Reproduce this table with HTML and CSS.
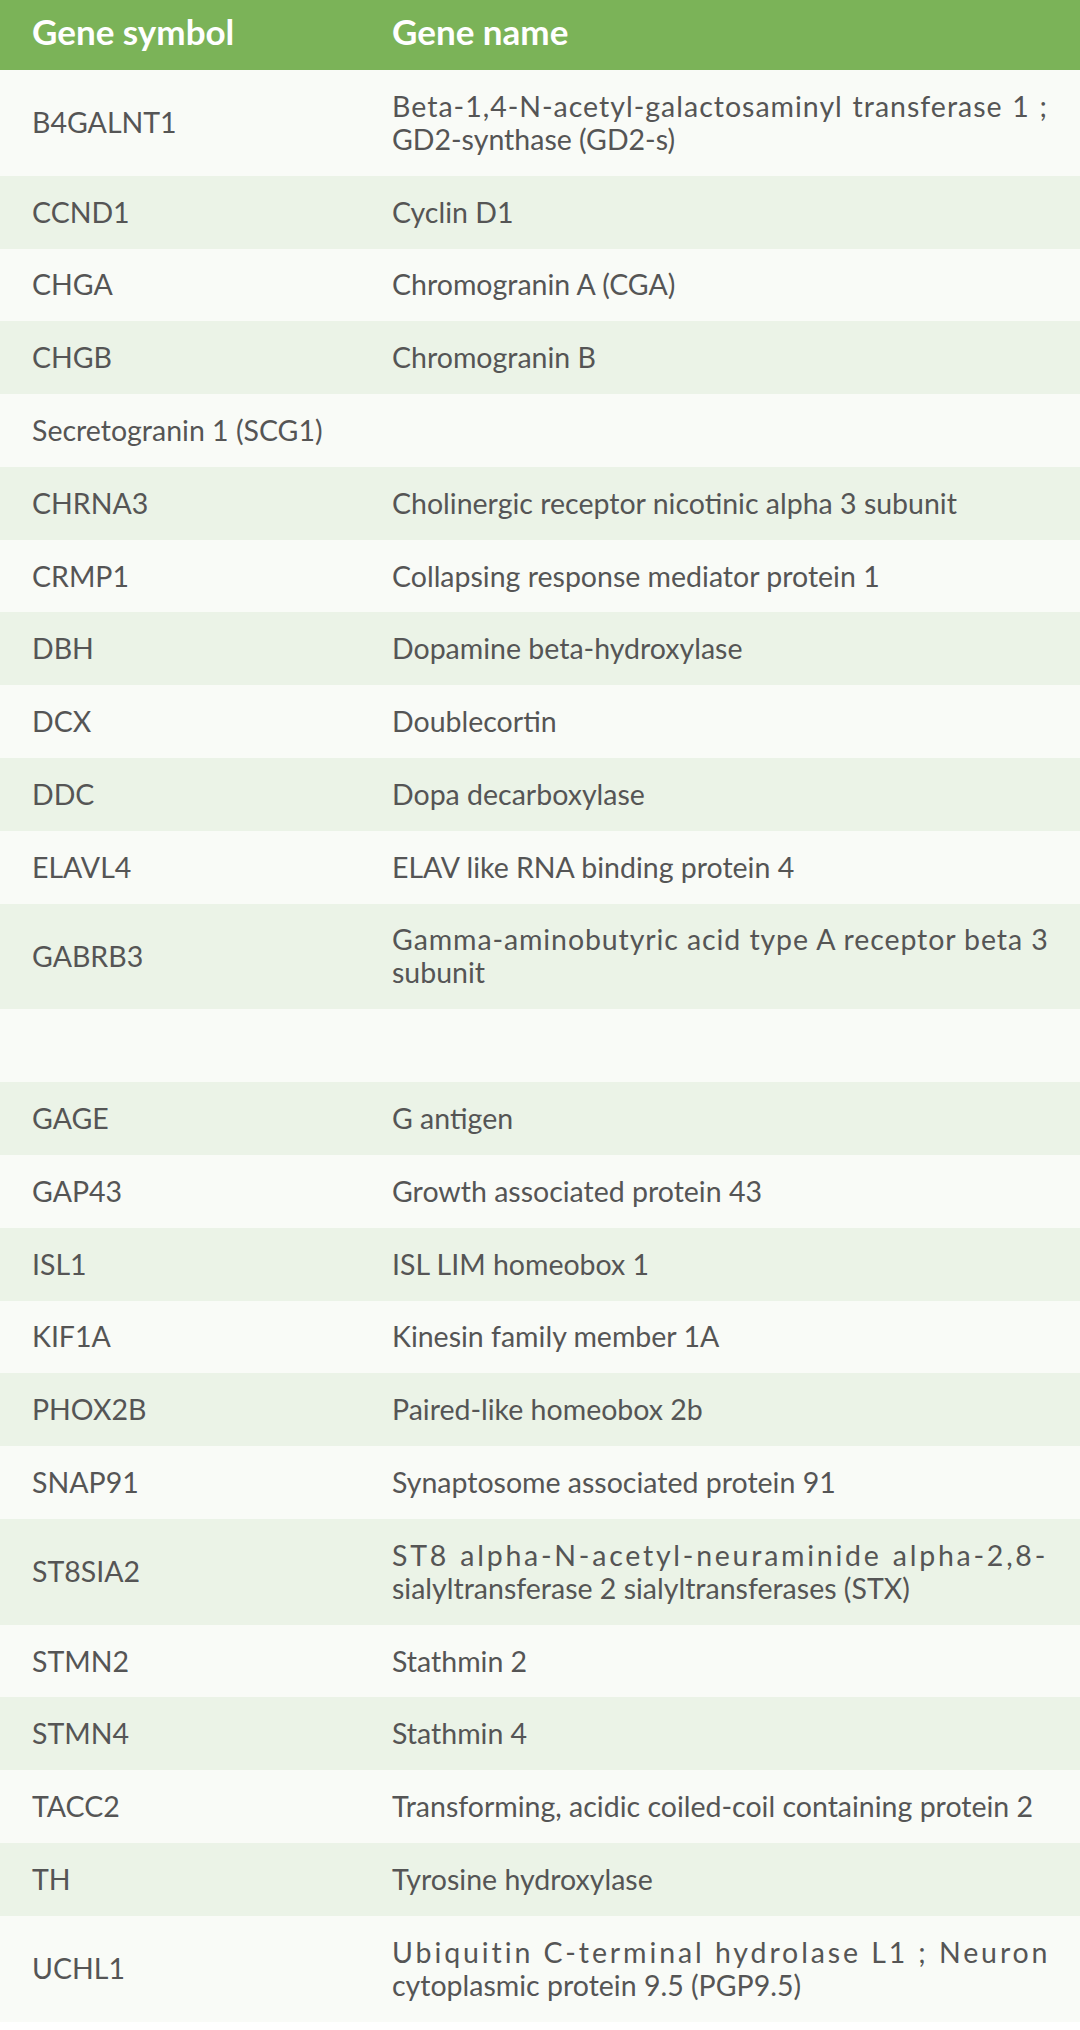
FILE: index.html
```html
<!DOCTYPE html>
<html lang="en">
<head>
<meta charset="utf-8">
<title>Gene markers</title>
<link rel="stylesheet" href="styles.css">
</head>
<body>
<table class="genes">
  <thead>
    <tr><th class="sym">Gene symbol</th><th class="name">Gene name</th></tr>
  </thead>
  <tbody>
    <tr><td class="sym">B4GALNT1</td><td class="name"><span class="line1 sp1">Beta-1,4-N-acetyl-galactosaminyl transferase 1 ;</span>GD2-synthase (GD2-s)</td></tr>
    <tr><td class="sym">CCND1</td><td class="name">Cyclin D1</td></tr>
    <tr><td class="sym">CHGA</td><td class="name">Chromogranin A (CGA)</td></tr>
    <tr><td class="sym">CHGB</td><td class="name">Chromogranin B</td></tr>
    <tr><td class="sym">Secretogranin 1 (SCG1)</td><td class="name"></td></tr>
    <tr><td class="sym">CHRNA3</td><td class="name">Cholinergic receptor nicotinic alpha 3 subunit</td></tr>
    <tr><td class="sym">CRMP1</td><td class="name">Collapsing response mediator protein 1</td></tr>
    <tr><td class="sym">DBH</td><td class="name">Dopamine beta-hydroxylase</td></tr>
    <tr><td class="sym">DCX</td><td class="name">Doublecortin</td></tr>
    <tr><td class="sym">DDC</td><td class="name">Dopa decarboxylase</td></tr>
    <tr><td class="sym">ELAVL4</td><td class="name">ELAV like RNA binding protein 4</td></tr>
    <tr><td class="sym">GABRB3</td><td class="name"><span class="line1 sp0">Gamma-aminobutyric acid type A receptor beta 3</span>subunit</td></tr>
    <tr><td class="sym"></td><td class="name"></td></tr>
    <tr><td class="sym">GAGE</td><td class="name">G antigen</td></tr>
    <tr><td class="sym">GAP43</td><td class="name">Growth associated protein 43</td></tr>
    <tr><td class="sym">ISL1</td><td class="name">ISL LIM homeobox 1</td></tr>
    <tr><td class="sym">KIF1A</td><td class="name">Kinesin family member 1A</td></tr>
    <tr><td class="sym">PHOX2B</td><td class="name">Paired-like homeobox 2b</td></tr>
    <tr><td class="sym">SNAP91</td><td class="name">Synaptosome associated protein 91</td></tr>
    <tr><td class="sym">ST8SIA2</td><td class="name"><span class="line1 sp2">ST8 alpha-N-acetyl-neuraminide alpha-2,8-</span>sialyltransferase 2 sialyltransferases (STX)</td></tr>
    <tr><td class="sym">STMN2</td><td class="name">Stathmin 2</td></tr>
    <tr><td class="sym">STMN4</td><td class="name">Stathmin 4</td></tr>
    <tr><td class="sym">TACC2</td><td class="name">Transforming, acidic coiled-coil containing protein 2</td></tr>
    <tr><td class="sym">TH</td><td class="name">Tyrosine hydroxylase</td></tr>
    <tr><td class="sym">UCHL1</td><td class="name"><span class="line1 sp3">Ubiquitin C-terminal hydrolase L1 ; Neuron</span>cytoplasmic protein 9.5 (PGP9.5)</td></tr>
  </tbody>
</table>
</body>
</html>
```
FILE: styles.css
```css
html, body {
  margin: 0;
  padding: 0;
  background: #ffffff;
}

.genes {
  width: 1080px;
  border-collapse: collapse;
  border-spacing: 0;
  font-family: Lato, "Noto Sans", sans-serif;
  table-layout: fixed;
}

.genes th {
  background: #7bb358;
  color: #ffffff;
  font-weight: 700;
  font-size: 35px;
  line-height: 32px;
  height: 32px;
  padding: 15px 32px 23px 0;
  text-align: left;
  vertical-align: middle;
}

.genes th.sym {
  width: 360px;
  padding-left: 32px;
  padding-right: 0;
}

.genes td {
  color: #555555;
  font-size: 28.5px;
  line-height: 33px;
  padding: 19.9px 32px;
  text-align: left;
  vertical-align: middle;
  height: 33px;
}

.genes td.sym {
  padding-right: 0;
  white-space: nowrap;
}

.genes td.name {
  padding-left: 0;
}

.genes tbody tr:nth-child(odd) {
  background: #f9fbf7;
}

.genes tbody tr:nth-child(even) {
  background: #ebf3e7;
}

.line1 {
  display: block;
  text-align: justify;
  text-align-last: justify;
  white-space: nowrap;
}

.sp0 {
  letter-spacing: 0.9px;
}

.sp1 {
  letter-spacing: 1px;
}

.sp2 {
  letter-spacing: 2.75px;
}

.sp3 {
  letter-spacing: 2.9px;
}
```
